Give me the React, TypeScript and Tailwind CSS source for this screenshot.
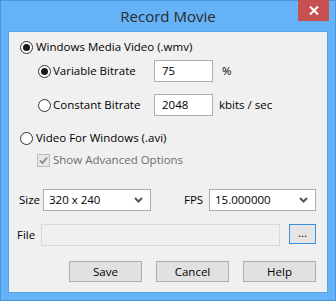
import { ReactNode } from "react";

function Radio({ checked }: { checked?: boolean }) {
  return (
    <svg width="13" height="13" viewBox="0 0 13 13" className="shrink-0">
      <circle cx="6.5" cy="6.5" r="6" fill="#fff" stroke="#333" strokeWidth="1" />
      {checked && <circle cx="6.5" cy="6.5" r="3.5" fill="#1a1a1a" />}
    </svg>
  );
}

function Chevron() {
  return (
    <svg width="9" height="6" viewBox="0 0 9 6" className="shrink-0">
      <path d="M1 1l3.5 3.5L8 1" fill="none" stroke="#555" strokeWidth="2" />
    </svg>
  );
}

function Box({ value, className }: { value: string; className: string }) {
  return (
    <div className={`flex h-[22px] items-center border border-[#abadb3] bg-white pl-[7px] ${className}`}>
      {value}
    </div>
  );
}

function Select({ value, className }: { value: string; className: string }) {
  return (
    <div className={`flex h-[22px] items-center justify-between border border-[#acacac] bg-white pl-[5px] pr-[7px] ${className}`}>
      <span>{value}</span>
      <Chevron />
    </div>
  );
}

function Btn({ children, className }: { children: ReactNode; className?: string }) {
  return (
    <div className={`flex h-[21px] w-[73px] items-center justify-center border border-[#adadad] bg-[#e1e1e1] ${className ?? ""}`}>
      {children}
    </div>
  );
}

export default function App() {
  return (
    <div className="flex h-[301px] w-[336px] flex-col border border-[#4a95dc] bg-[#65b2f7] font-['Open_Sans','Liberation_Sans',sans-serif] text-[11.5px] leading-none text-black">
      <div className="relative flex h-[30px] shrink-0 items-center justify-center">
        <span className="pt-[1px] text-[15px] text-[#2b2b2b]">Record Movie</span>
        <div className="absolute right-[6px] top-[-1px] flex h-[21px] w-[31px] items-center justify-center bg-[#c75050]">
          <svg width="10" height="9" viewBox="0 0 10 9">
            <path d="M1 0.5l8 8M9 0.5l-8 8" stroke="#fff" strokeWidth="2" />
          </svg>
        </div>
      </div>
      <div className="mx-[7px] flex h-[262px] flex-col border border-[#5aa2e6] bg-[#f0f0f0] px-[11px]">
        <div className="mt-[8px] flex h-[14px] items-center gap-[3px]">
          <Radio checked />
          <span>Windows Media Video (.wmv)</span>
        </div>
        <div className="mt-[6px] flex h-[22px] items-center pl-[18px]">
          <Radio checked />
          <span className="ml-[2px] w-[101px]">Variable Bitrate</span>
          <Box value="75" className="w-[59px]" />
          <span className="ml-[9px]">%</span>
        </div>
        <div className="mt-[12px] flex h-[22px] items-center pl-[18px]">
          <Radio />
          <span className="ml-[2px] w-[101px]">Constant Bitrate</span>
          <Box value="2048" className="w-[59px]" />
          <span className="ml-[6px]">kbits / sec</span>
        </div>
        <div className="mt-[15px] flex h-[14px] items-center gap-[3px]">
          <Radio />
          <span>Video For Windows (.avi)</span>
        </div>
        <div className="mt-[8px] flex h-[14px] items-center pl-[17px] text-[#6d6d6d]">
          <svg width="13" height="13" viewBox="0 0 13 13" className="shrink-0">
            <rect x="0.5" y="0.5" width="12" height="12" fill="#e6e6e6" stroke="#bcbcbc" />
            <path d="M3 6.5l2.5 2.5L10 3.5" fill="none" stroke="#838383" strokeWidth="1.6" />
          </svg>
          <span className="ml-[3px]">Show Advanced Options</span>
        </div>
        <div className="mt-[22px] flex h-[22px] items-center">
          <span className="ml-[-1px] w-[24px]">Size</span>
          <Select value="320 x 240" className="w-[108px]" />
          <span className="ml-[33px] w-[25px]">FPS</span>
          <Select value="15.000000" className="w-[107px]" />
        </div>
        <div className="mt-[13px] flex h-[22px] items-center">
          <span className="ml-[-3px] w-[24px]">File</span>
          <div className="h-[22px] w-[239px] border border-[#d9d9d9] bg-[#f0f0f0]" />
          <div className="ml-[9px] flex h-[20px] w-[27px] items-end justify-center self-start border border-[#3c8fe0] bg-[#e5e5e5] pb-[5px]">
            ...
          </div>
        </div>
        <div className="mt-[15px] flex h-[21px] items-center gap-[14px] pl-[49px]">
          <Btn>Save</Btn>
          <Btn>Cancel</Btn>
          <Btn>Help</Btn>
        </div>
      </div>
    </div>
  );
}
